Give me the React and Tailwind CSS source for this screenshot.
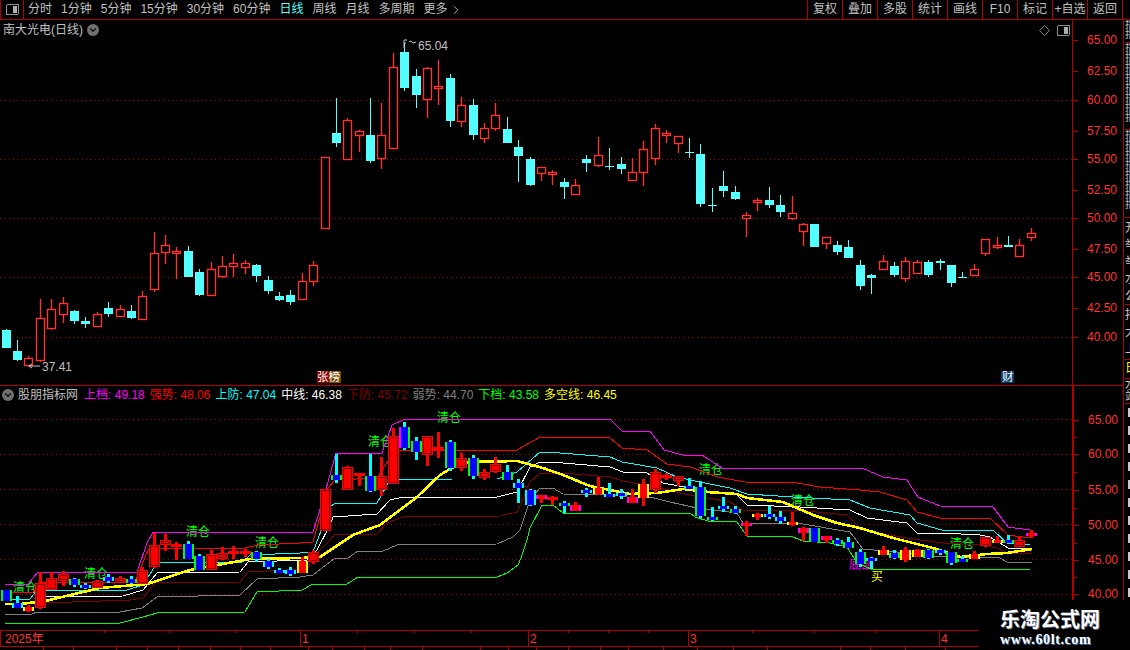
import React from 'react';
import { ChevronDown, ChevronRight } from 'lucide-react';

const FONT = "[font-family:'Liberation_Sans','Noto_Sans_CJK_SC',sans-serif]";

const periods = [
  { label: '分时' }, { label: '1分钟' }, { label: '5分钟' }, { label: '15分钟' },
  { label: '30分钟' }, { label: '60分钟' }, { label: '日线', active: true },
  { label: '周线' }, { label: '月线' }, { label: '多周期' },
];
const tools = ['复权', '叠加', '多股', '统计', '画线', 'F10', '标记', '+自选', '返回'];

// [wick top, body top, body bottom, wick bottom, colour, style in lower panel]
const candles = [
  [329, 330, 348, 348, 'c', 'g'], [340, 351, 360, 361, 'c', 'c'], [356, 358, 366, 367, 'r', 'y'],
  [299, 318, 361, 362, 'r', 'r'], [299, 309, 329, 330, 'r', 'r'], [297, 303, 315, 323, 'r', 'r'],
  [310, 311, 321, 324, 'c', 'g'], [317, 321, 324, 328, 'c', 'c'], [312, 314, 327, 327, 'r', 'r'],
  [302, 308, 314, 317, 'c', 'c'], [305, 309, 317, 317, 'r', 'r'], [305, 311, 318, 319, 'c', 'g'],
  [291, 296, 320, 320, 'r', 'r'], [232, 253, 290, 292, 'r', 'r'], [235, 245, 253, 264, 'r', 'r'],
  [247, 251, 254, 279, 'r', 'r'], [246, 251, 277, 277, 'c', 'g'], [269, 272, 295, 296, 'c', 'g'],
  [262, 269, 296, 296, 'r', 'r'], [256, 266, 277, 278, 'r', 'r'], [254, 263, 267, 277, 'r', 'r'],
  [260, 263, 268, 274, 'r', 'r'], [264, 265, 276, 282, 'c', 'g'], [276, 280, 291, 294, 'c', 'c'],
  [292, 296, 300, 301, 'c', 'c'], [290, 295, 302, 305, 'c', 'c'], [273, 281, 300, 300, 'r', 'y'],
  [261, 265, 282, 286, 'r', 'r'], [157, 157, 229, 229, 'r', 'r'], [98, 133, 143, 147, 'c', 'g'],
  [118, 120, 160, 160, 'r', 'r'], [130, 131, 136, 152, 'r', 'r'], [98, 135, 161, 163, 'c', 'g'],
  [103, 135, 159, 169, 'r', 'r'], [53, 67, 149, 149, 'r', 'r'], [43, 52, 88, 91, 'c', 'M'],
  [69, 76, 95, 108, 'c', 'g'], [67, 68, 100, 118, 'r', 'r'], [60, 86, 89, 105, 'r', 'r'],
  [74, 78, 121, 127, 'c', 'g'], [97, 105, 122, 127, 'r', 'r'], [99, 105, 135, 140, 'c', 'g'],
  [123, 128, 139, 143, 'r', 'r'], [103, 115, 129, 131, 'r', 'r'], [117, 129, 143, 143, 'c', 'g'],
  [140, 147, 156, 182, 'c', 'c'], [157, 159, 185, 186, 'c', 'c'], [167, 167, 174, 181, 'r', 'm'],
  [170, 172, 175, 185, 'r', 'r'], [178, 182, 187, 199, 'c', 'g'], [179, 185, 195, 195, 'r', 'm'],
  [155, 159, 163, 172, 'c', 'c'], [137, 155, 166, 167, 'r', 'y'], [148, 166, 167, 170, 'c', 'c'],
  [157, 164, 169, 174, 'c', 'c'], [158, 172, 181, 181, 'r', 'm'], [141, 149, 173, 186, 'r', 'y'],
  [124, 128, 159, 165, 'r', 'r'], [130, 133, 135, 143, 'r', 'r'], [136, 136, 144, 153, 'r', 'r'],
  [138, 152, 153, 158, 'c', 'c'], [144, 154, 204, 207, 'c', 'g'], [188, 205, 206, 212, 'c', 'g'],
  [171, 186, 191, 197, 'c', 'c'], [186, 192, 199, 200, 'c', 'g'], [212, 215, 219, 237, 'r', 'm'],
  [198, 200, 203, 211, 'r', 'y'], [187, 200, 205, 208, 'c', 'c'], [195, 205, 212, 217, 'c', 'c'],
  [196, 213, 219, 220, 'r', 'y'], [223, 224, 232, 246, 'r', 'm'], [224, 224, 247, 247, 'c', 'g'],
  [237, 237, 244, 249, 'r', 'm'], [241, 245, 252, 255, 'c', 'g'], [240, 247, 258, 258, 'c', 'g'],
  [260, 265, 286, 290, 'c', 'g'], [274, 275, 278, 294, 'c', 'c'], [255, 261, 270, 270, 'r', 'y'],
  [262, 266, 275, 277, 'c', 'g'], [257, 261, 279, 282, 'r', 'y'], [260, 262, 274, 274, 'r', 'y'],
  [260, 262, 275, 277, 'c', 'g'], [259, 261, 263, 270, 'c', 'c'], [265, 265, 283, 287, 'c', 'g'],
  [272, 277, 278, 278, 'c', 'g'], [264, 269, 276, 276, 'r', 'y'], [239, 239, 254, 256, 'r', 'r'],
  [237, 245, 248, 249, 'r', 'y'], [236, 245, 247, 247, 'c', 'g'], [239, 245, 257, 257, 'r', 'r'],
  [228, 233, 238, 241, 'r', 'm'],
];
const cx = i => Math.round(5.6 + 11.39 * i);
const lowerY = y => 420 + (y - 40) * 0.587;

const sideColor = { g: '#00ff00', c: '#00ffff', m: '#ff00ff', y: '#ffff00', M: '#ff00ff' };

const indicatorLines = [
  { color: '#00ff00', pts: '5,623 120,623 143,617 157,613 245,612 257,592 302,590 313,584 347,584 358,577 497,577 507,573 518,565 521,558 527,540 530,528 542,505 553,505 563,513 690,513 695,517 708,521 737,522 747,536 793,537 803,541 830,543 847,547 857,563 873,570 1030,569' },
  { color: '#808080', pts: '5,614 32,614 37,612 120,612 142,608 157,597 240,595 257,579 300,577 313,575 335,558 348,558 358,551 383,551 397,545 497,544 513,537 520,530 530,500 540,488 553,488 563,494 610,495 627,497 650,497 670,502 697,508 737,513 743,523 797,523 850,532 863,549 897,552 933,556 1000,558 1007,562 1032,562' },
  { color: '#800000', pts: '43,603 130,600 143,598 155,583 240,582 248,572 307,569 317,553 330,540 335,534 377,534 387,523 403,517 500,516 517,512 530,482 540,473 563,473 610,477 623,481 657,487 680,493 707,498 730,502 743,510 797,510 847,515 862,530 907,538 920,540 943,543 980,545 997,548 1007,553 1032,554' },
  { color: '#ffffff', pts: '5,603 30,603 45,597 123,596 143,590 157,573 240,572 248,562 307,560 317,550 330,525 333,517 377,514 390,500 403,497 497,497 517,492 530,467 540,462 563,463 610,467 623,472 647,473 663,483 700,490 737,495 747,505 800,507 850,510 867,518 907,523 917,533 942,533 980,535 990,537 1008,548 1032,549' },
  { color: '#00ffff', pts: '7,599 30,599 37,590 127,590 143,585 157,563 243,562 250,555 300,553 313,552 330,507 335,503 377,503 390,480 453,479 497,479 517,472 540,452 560,453 610,457 622,462 657,468 677,477 700,482 730,488 747,494 793,497 850,500 870,508 910,515 917,523 942,530 993,530 1007,543 1030,545' },
  { color: '#ff0000', pts: '5,592 33,592 40,582 135,582 148,550 165,548 245,548 258,545 300,543 313,542 328,488 335,480 377,478 392,455 400,450 517,450 540,437 610,438 622,448 647,450 667,464 690,467 718,477 745,482 797,483 820,487 860,490 880,492 907,500 917,512 940,518 990,518 1008,535 1030,538' },
  { color: '#ff00ff', pts: '5,584 28,584 38,572 137,572 147,543 153,532 313,532 323,500 336,453 382,453 392,425 405,419 610,419 622,431 650,431 664,450 683,455 702,455 722,468 862,468 883,477 907,480 918,497 940,506 993,507 1008,527 1030,530' },
];
const yellowLine = '5,604 20,604 45,601 100,588 147,584 190,570 250,559 300,558 320,557 353,535 380,525 417,497 440,475 457,465 470,462 517,461 543,468 563,475 590,486 630,494 657,493 683,489 707,492 737,494 747,498 783,502 813,515 837,523 860,528 893,538 933,548 960,557 987,554 1007,553 1032,549';

const clearMarks = [[25, 587], [96, 573], [198, 531], [267, 542], [380, 441], [449, 417], [711, 469], [803, 500], [962, 543]];

const upperTicks = [
  ['65.00', 40], ['62.50', 71], ['60.00', 100], ['57.50', 131], ['55.00', 159], ['52.50', 190],
  ['50.00', 218], ['47.50', 249], ['45.00', 277], ['42.50', 308], ['40.00', 337],
];
const lowerTicks = [['65.00', 420], ['60.00', 454], ['55.00', 490], ['50.00', 525], ['45.00', 560], ['40.00', 594]];

const legend = [
  ['上档', '49.18', 'text-[#ff00ff]'], ['强势', '48.06', 'text-[#ff0000]'], ['上防', '47.04', 'text-[#00ffff]'],
  ['中线', '46.38', 'text-white'], ['下防', '45.72', 'text-[#800000]'], ['弱势', '44.70', 'text-[#808080]'],
  ['下档', '43.58', 'text-[#00ff00]'], ['多空线', '46.45', 'text-[#ffff00]'],
];

// rows of the clipped list at the far right: [rows, section height]
const stripRows = [[2, 23], [8, 87], [8, 88]];

function PanelIcon() {
  return (
    <svg width="13" height="11" viewBox="0 0 13 11" shapeRendering="crispEdges">
      <rect x="0.5" y="0.5" width="12" height="10" rx="1.5" fill="none" stroke="#909090" />
      <rect x="7" y="2" width="4" height="7" fill="#b0b0b0" />
    </svg>
  );
}

function RoundChevron({ className }) {
  return (
    <span className={`flex h-[12px] w-[12px] items-center justify-center rounded-full bg-[#707070] ${className}`}>
      <ChevronDown size={10} strokeWidth={3} color="#111" />
    </span>
  );
}

function Axis({ ticks, offset, thick }) {
  return (
    <div className={`relative h-full w-[51px] border-[#b00000] ${thick ? 'border-l-2' : 'border-l'}`}>
      {ticks.map(([label, y], i) => (
        <React.Fragment key={label}>
          <div className="absolute left-0 h-px w-[5px] bg-[#b00000]" style={{ top: y - offset }} />
          {i < ticks.length - 1 && ticks.length < 8 && (
            <div className="absolute left-0 h-px w-[3px] bg-[#b00000]" style={{ top: (y + ticks[i + 1][1]) / 2 - offset }} />
          )}
          <span className="absolute left-[14px] text-[12px] leading-[14px] text-[#ff3232]" style={{ top: y - offset - 7 }}>
            {label}
          </span>
        </React.Fragment>
      ))}
    </div>
  );
}

function Grid({ ys }) {
  return ys.map(y => (
    <line key={y} x1="0" x2="1072" y1={y + 0.5} y2={y + 0.5} stroke="#a00000" strokeDasharray="1 3.3" shapeRendering="crispEdges" />
  ));
}

function UpperChart() {
  return (
    <svg width="1072" height="365" viewBox="0 20 1072 365" className="block">
      <Grid ys={[100, 159, 218, 277, 337]} />
      {candles.map(([hi, top, bot, lo, c], i) => {
        const x = cx(i);
        if (c === 'r') {
          return (
            <g key={i} stroke="#ff3232" strokeWidth="1.35">
              <line x1={x + 0.5} x2={x + 0.5} y1={hi} y2={lo} />
              <rect x={x - 3.5} y={top + 0.5} width={8} height={Math.max(bot - top - 1, 2)} fill="#000" />
            </g>
          );
        }
        return (
          <g key={i} shapeRendering="crispEdges">
            <line x1={x + 0.5} x2={x + 0.5} y1={hi} y2={lo} stroke="#54ffff" />
            <rect x={x - 4} y={top} width={9} height={Math.max(bot - top, 1)} fill="#54ffff" />
          </g>
        );
      })}
      <path d="M404 48V40h3M404 43h2M409 42l2-1 2 2 3-1" fill="none" stroke="#c0c0c0" />
      <text x="418" y="50" className="fill-[#c0c0c0] text-[12px]">65.04</text>
      <path d="M29 366h11M29 366l3-2M29 366l3 2" fill="none" stroke="#c0c0c0" />
      <text x="42" y="371" className="fill-[#c0c0c0] text-[12px]">37.41</text>
      <rect x="317" y="371" width="12" height="12" fill="#8a0000" />
      <rect x="329" y="371" width="12" height="12" fill="#7a4a00" />
      <text x="317" y="381" className="fill-white text-[11.5px]">张榜</text>
      <rect x="1001" y="371" width="13" height="12" fill="#0a3a6a" />
      <text x="1002" y="381" className="fill-white text-[11.5px]">财</text>
    </svg>
  );
}

function LowerCandle({ data, i }) {
  const [hi, top, bot, lo, c, style] = data;
  const x = cx(i);
  const yh = Math.round(lowerY(hi));
  const yl = Math.round(lowerY(lo));
  const yt = Math.round(lowerY(top));
  const h = Math.max(Math.round(lowerY(bot)) - yt, 3);
  const isRed = c === 'r';
  const side = sideColor[style];
  return (
    <g>
      <rect x={x - 1} y={yh} width={3} height={Math.max(yl - yh, h)} fill={isRed ? '#ff0000' : '#00ffff'} />
      {isRed && style === 'r' && (
        <>
          <rect x={x - 5} y={yt} width={11} height={h} fill="#ff0000" />
          {h > 4 && <rect x={x - 3.5} y={yt + 1.5} width={8} height={h - 3} fill="#ff0000" stroke="#700000" />}
        </>
      )}
      {isRed && style !== 'r' && (
        <>
          <rect x={x - 5} y={yt} width={11} height={h} fill={side} />
          <rect x={x - 3} y={yt} width={7} height={h} fill="#ff0000" />
        </>
      )}
      {!isRed && (
        <>
          <rect x={x - 5} y={yt} width={11} height={h} fill={style === 'M' ? '#00ff00' : side} />
          {style === 'M' && <rect x={x - 5} y={yt} width={3} height={h} fill="#ff00ff" />}
          <rect x={x - 3} y={yt} width={7} height={h} fill="#0000ff" />
        </>
      )}
    </g>
  );
}

function LowerChart() {
  return (
    <svg width="1072" height="244" viewBox="0 386 1072 244" className="block" shapeRendering="crispEdges">
      <Grid ys={[419, 454, 489, 524, 559, 594]} />
      {clearMarks.map(([x, y]) => (
        <text key={x} x={x} y={y + 5} textAnchor="middle" className="fill-[#00ff00] text-[12px]">清仓</text>
      ))}
      <text x="861" y="569" textAnchor="middle" className="fill-[#ff00ff] text-[12px]">底部</text>
      {indicatorLines.map(l => (
        <polyline key={l.color} points={l.pts} fill="none" stroke={l.color} strokeWidth="1" />
      ))}
      <polyline points={yellowLine} fill="none" stroke="#ffff00" strokeWidth="2.6" />
      {candles.map((d, i) => <LowerCandle key={i} data={d} i={i} />)}
      <text x="877" y="581" textAnchor="middle" className="fill-[#ffff00] text-[12px]">买</text>
    </svg>
  );
}

function TimeAxis() {
  const topTicks = [104, 169, 235, 357, 414, 471, 568, 608, 648, 752, 814, 876];
  const botTicks = [43, 73, 116, 147, 178, 210, 240, 270, 308, 332, 364, 390, 422, 480, 508, 536, 568, 600, 628, 663, 697, 733, 767, 840, 870, 905, 945];
  return (
    <svg width="978" height="20" viewBox="0 630 978 20" className="block" shapeRendering="crispEdges">
      <path d="M0 630.5H978M0 646.5H978M0.5 630V646M300.5 630V646M528.5 630V646M688.5 630V646M939.5 630V646" stroke="#b00000" fill="none" />
      {topTicks.map(x => <line key={x} x1={x + 0.5} x2={x + 0.5} y1="631" y2="633" stroke="#b00000" />)}
      {botTicks.map(x => <line key={x} x1={x + 0.5} x2={x + 0.5} y1="647" y2="650" stroke="#b00000" />)}
      <text x="5" y="643" className="fill-[#ff3232] text-[12px]">2025年</text>
      <text x="302" y="643" className="fill-[#ff3232] text-[12px]">1</text>
      <text x="530" y="643" className="fill-[#ff3232] text-[12px]">2</text>
      <text x="690" y="643" className="fill-[#ff3232] text-[12px]">3</text>
      <text x="941" y="643" className="fill-[#ff3232] text-[12px]">4</text>
    </svg>
  );
}

// the clipped text column at the far right edge of the window
function RightStrip() {
  return (
    <div className="flex h-[630px] w-[7px] flex-col overflow-hidden border-l border-[#b00000] pl-[1px] text-[12px] text-[#c8c8c8]">
      {stripRows.map(([n, h], i) => (
        <div key={i} className="shrink-0 overflow-hidden border-b border-[#b00000] text-[10px] leading-[10px]" style={{ height: h }}>
          {Array.from({ length: n }).map((_, k) => <div key={k}>指</div>)}
        </div>
      ))}
      <div className="h-[87px] shrink-0 overflow-hidden border-b border-[#b00000] pt-[2px] leading-[17px]">
        <div>开</div><div>举</div><div>举</div><div>水</div><div>公</div>
      </div>
      <div className="h-[55px] shrink-0 overflow-hidden border-b border-[#b00000] pt-[2px] leading-[17px]">
        <div>持</div><div>大</div><div>上</div>
      </div>
      <div className="h-[19px] shrink-0 overflow-hidden border-b border-[#b00000] leading-[17px] text-[#ffff00]">日</div>
      <div className="h-[25px] shrink-0 overflow-hidden border-b border-[#b00000] leading-[12px]">
        <div>水</div><div>站</div>
      </div>
      <div className="flex flex-col gap-[9px] pl-[3px] pt-[4px]">
        {Array.from({ length: 11 }).map((_, k) => <div key={k} className="h-[9px] w-[3px] shrink-0 bg-[#c8c8c8]" />)}
      </div>
    </div>
  );
}

export default function App() {
  return (
    <div className={`relative h-[650px] w-[1130px] overflow-hidden bg-black text-[#c0c0c0] ${FONT}`}>
      {/* toolbar */}
      <div className="flex h-[20px] items-stretch border-b border-[#b00000] text-[12px] leading-[19px]">
        <div className="flex w-[24px] items-center justify-center border-x border-[#b00000]">
          <PanelIcon />
        </div>
        <div className="ml-[4px] flex gap-[9px]">
          {periods.map(p => (
            <span key={p.label} className={p.active ? 'text-[#54ffff]' : ''}>{p.label}</span>
          ))}
          <span className="flex items-center">更多<ChevronRight size={14} strokeWidth={1.5} className="ml-[1px]" /></span>
        </div>
        <div className="ml-auto mr-[7px] flex border-r border-[#b00000]">
          {tools.map(t => (
            <span key={t} className="w-[35px] border-l border-[#b00000] text-center">{t}</span>
          ))}
        </div>
      </div>

      <div className="flex">
        <div className="w-[1123px]">
          {/* price panel */}
          <div className="relative flex h-[366px] border-b border-[#b00000]">
            <UpperChart />
            <Axis ticks={upperTicks} offset={20} />
            <div className="absolute left-[3px] top-[2px] flex items-center gap-[4px] text-[12px] leading-[16px]">
              <span>南大光电(日线)</span>
              <RoundChevron />
            </div>
            <div className="absolute left-[1039px] top-[5px] flex items-center gap-[7px]">
              <svg width="11" height="11" viewBox="0 0 11 11"><path d="M5.5 0.5L10.5 5.5L5.5 10.5L0.5 5.5Z" fill="none" stroke="#808080" /></svg>
              <PanelIcon />
            </div>
          </div>

          {/* indicator panel */}
          <div className="relative flex h-[244px]">
            <LowerChart />
            <Axis ticks={lowerTicks} offset={386} thick />
            <div className="absolute left-[2px] top-[1px] flex items-center text-[12px] leading-[16px]">
              <RoundChevron className="mr-[4px]" />
              <span className="mr-[6px]">股朋指标网</span>
              <div className="flex gap-[5px]">
                {legend.map(([name, value, color]) => (
                  <span key={name} className={color}>{name}: {value}</span>
                ))}
              </div>
            </div>
          </div>

          <TimeAxis />
        </div>
        <RightStrip />
      </div>

      {/* watermark stamped over the corner */}
      <div className="absolute left-[978px] top-[600px] flex h-[50px] w-[152px] flex-col items-start bg-black pl-[22px] pt-[9px]">
        <span className="text-[20px] font-bold leading-[22px] text-white [text-shadow:1px_1px_0_#5a6a80]">乐淘公式网</span>
        <span className="mt-[1px] [font-family:'Liberation_Serif',serif] text-[14px] font-bold leading-[15px] tracking-[0.6px] text-white [text-shadow:1px_1px_0_#3a6ea5]">www.60lt.com</span>
      </div>
    </div>
  );
}
